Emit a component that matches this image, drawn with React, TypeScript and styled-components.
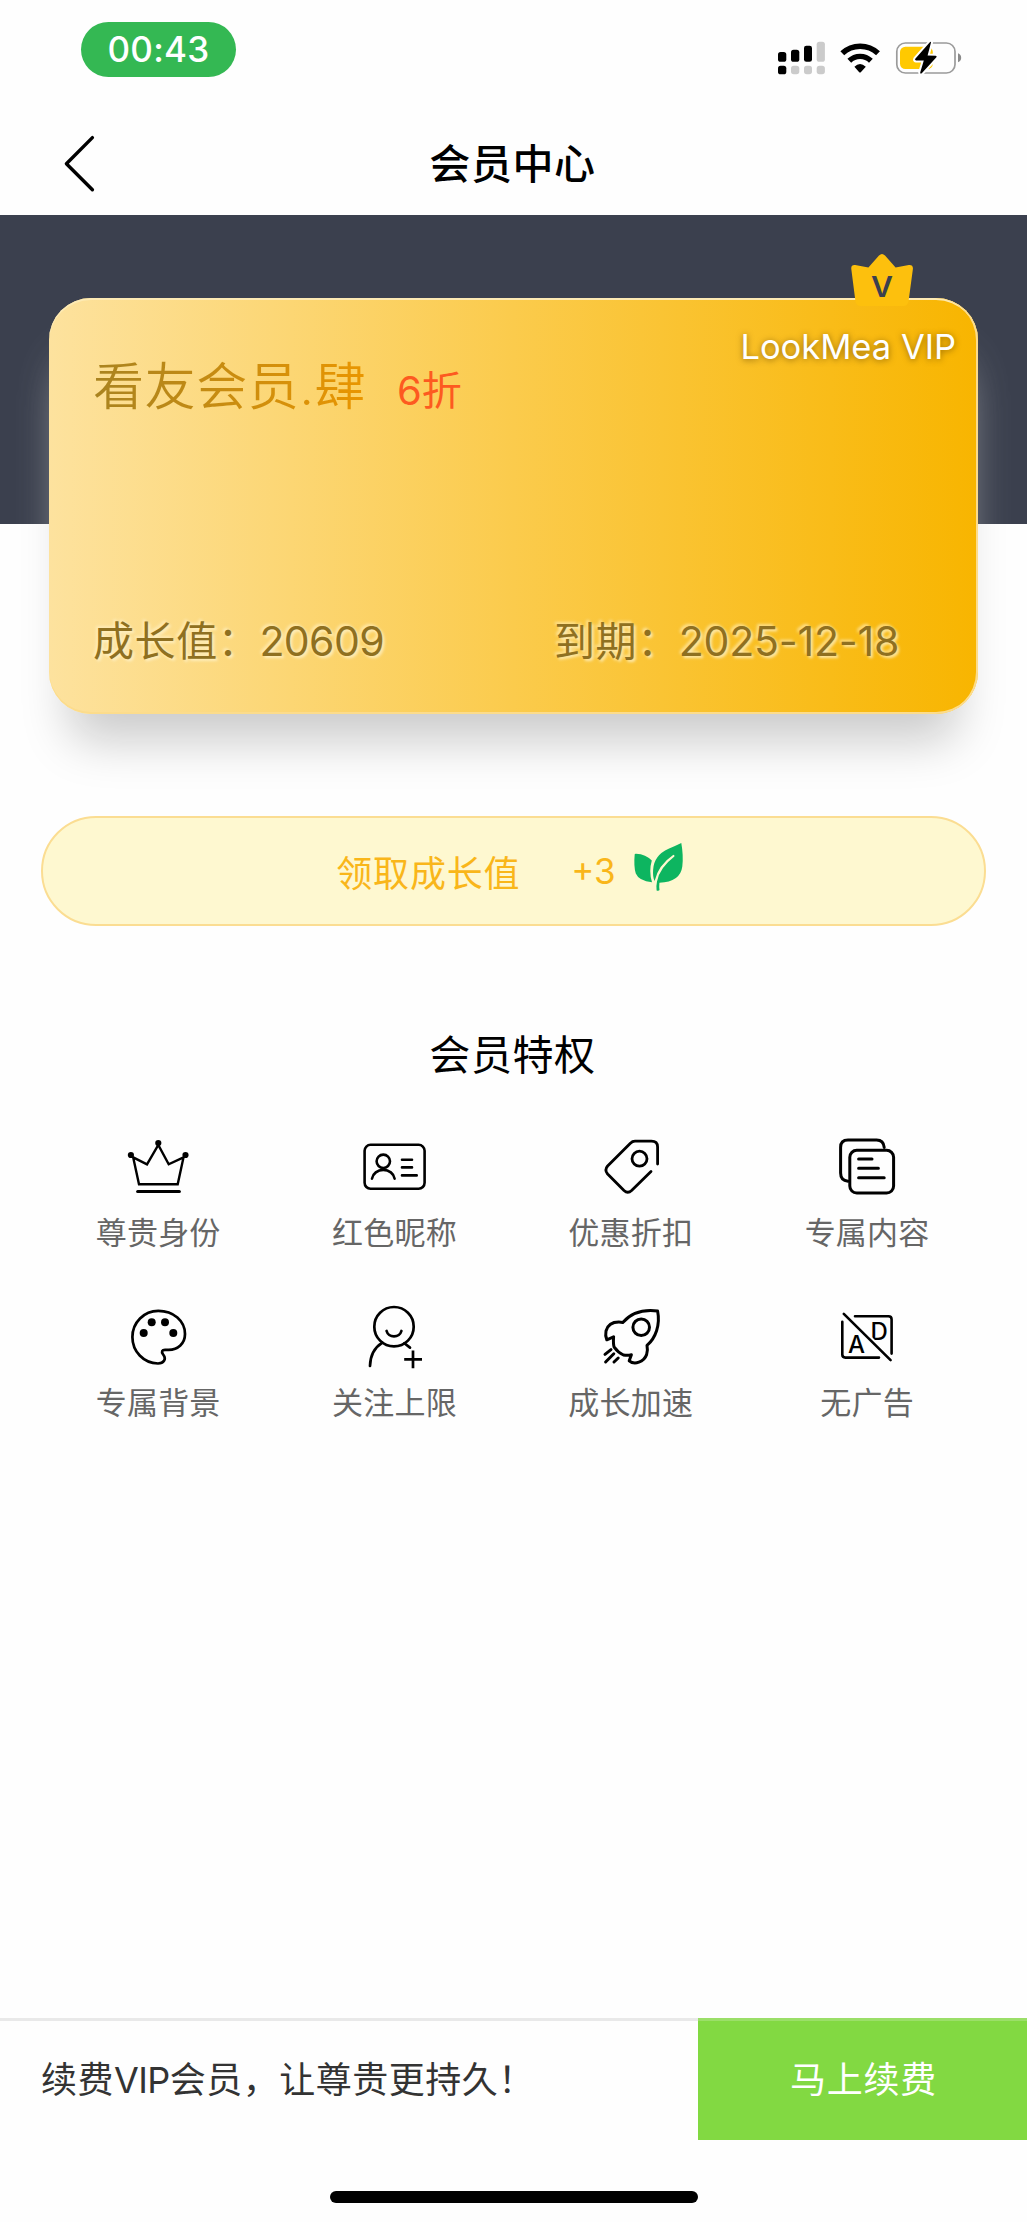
import React from 'react';
import styled, { createGlobalStyle } from 'styled-components';

const Global = createGlobalStyle`
  * { box-sizing: border-box; }
  body {
    margin: 0;
    background: #fefefe;
    font-family: Inter, 'Noto Sans CJK SC', sans-serif;
    font-weight: 400;
    color: #000;
  }
  svg { display: block; flex: none; }
`;

const Page = styled.div`
  width: 1027px;
  height: 2222px;
  display: flex;
  flex-direction: column;
  background: #fefefe;
  overflow: hidden;
`;

const StatusBar = styled.header`
  height: 112px;
  padding: 22px 0 0 81px;
  display: flex;
  align-items: flex-start;
`;

const Clock = styled.div`
  width: 155px;
  height: 55px;
  border-radius: 27.5px;
  background: #34b853;
  color: #fff;
  font-size: 35px;
  font-weight: 500;
  line-height: 55px;
  text-align: center;
  letter-spacing: 0.3px;
`;

const StatusIcons = styled.div`
  margin: 13px 0 0 534px;
`;

const NavBar = styled.nav`
  height: 103px;
  flex: none;
  display: grid;
  grid-template-columns: 159px 1fr 161px;
  align-items: center;
`;

const BackButton = styled.button`
  border: 0;
  padding: 0 0 0 60px;
  background: none;
  height: 103px;
`;

const NavTitle = styled.h1`
  margin: 0;
  font-size: 41px;
  line-height: 60px;
  font-weight: 500;
  letter-spacing: 0.6px;
  text-align: center;
`;

const Hero = styled.section`
  height: 309px;
  flex: none;
  padding: 83px 49px 0;
  background: #3b404e;
`;

const Card = styled.article`
  position: relative;
  height: 416px;
  padding: 52px 44px 43px;
  border-radius: 42px;
  display: flex;
  flex-direction: column;
  justify-content: space-between;
  background: linear-gradient(90deg, #fde29e 0%, #fbcb4c 50%, #f8b500 100%);
  box-shadow: inset -2px 0 0 #fcdc8c, inset 0 2px 0 #fdeab4, inset 0 -2px 0 #fcdc8c,
    0 47px 48px -20px #cbcbcb;
`;

const CardBadge = styled.div`
  position: absolute;
  right: 22px;
  top: -48px;
  display: flex;
  flex-direction: column;
  align-items: flex-end;
`;

const BadgeCrown = styled.div`
  padding-right: 42px;
`;

const BadgeName = styled.div`
  margin-top: 17px;
  font-size: 34.5px;
  line-height: 44px;
  color: #fff;
  white-space: nowrap;
  text-shadow: 0 1px 6px rgba(90, 60, 0, 0.65);
`;

const CardHead = styled.div`
  display: flex;
  align-items: baseline;
  gap: 31px;
`;

const LevelName = styled.span`
  font-size: 51px;
  line-height: 74px;
  font-weight: 350;
  letter-spacing: 0.6px;
  color: transparent;
  background: linear-gradient(90deg, #a98320, #ea9600);
  background-clip: text;
  -webkit-background-clip: text;
`;

const Discount = styled.span`
  font-size: 40px;
  color: #fd5a20;
`;

const CardStats = styled.div`
  display: grid;
  grid-template-columns: 461px 1fr;
`;

const Stat = styled.span`
  font-size: 41px;
  line-height: 60px;
  letter-spacing: 0.6px;
  color: #8f7020;
  white-space: nowrap;
  text-shadow: 2px 2px 3px rgba(255, 245, 210, 0.8), -2px -2px 3px rgba(255, 245, 210, 0.6);
`;

const Latin = styled.span<{ $track: number }>`
  letter-spacing: ${(p) => p.$track}px;
`;

const ClaimButton = styled.button`
  height: 110px;
  flex: none;
  margin: 292px 41px 0;
  padding: 0 6px 0 0;
  border: 2px solid #fbdd92;
  border-radius: 55px;
  background: #fef8d0;
  color: #f9b61a;
  font: inherit;
  font-size: 36px;
  display: flex;
  align-items: center;
  justify-content: center;
`;

const ClaimLabel = styled.span`
  letter-spacing: 0.8px;
`;

const ClaimAmount = styled.span`
  margin: 0 15px 0 51px;
  font-size: 35px;
`;

const LeafBox = styled.span`
  padding-bottom: 9px;
`;

const SectionTitle = styled.h2`
  margin: 99px 2px 0 0;
  font-size: 41px;
  line-height: 60px;
  font-weight: 400;
  letter-spacing: 0.6px;
  text-align: center;
`;

const Benefits = styled.ul`
  list-style: none;
  margin: 50px 40px 0;
  padding: 0;
  display: grid;
  grid-template-columns: repeat(4, 236.3px);
  grid-auto-rows: 170px;
`;

const Benefit = styled.li`
  display: flex;
  flex-direction: column;
  align-items: center;
`;

const BenefitLabel = styled.span`
  margin-top: 11px;
  font-size: 31px;
  line-height: 46px;
  letter-spacing: 0.2px;
  color: #666;
`;

const Footer = styled.footer`
  margin-top: auto;
  height: 204px;
  flex: none;
  display: flex;
  flex-direction: column;
  align-items: center;
`;

const RenewBar = styled.div`
  width: 100%;
  height: 122px;
  display: flex;
`;

const RenewText = styled.p`
  margin: 0;
  flex: 1;
  padding-left: 41px;
  border-top: 3px solid #e9e9e9;
  font-size: 36px;
  line-height: 119px;
  letter-spacing: 0.5px;
  color: #333;
  white-space: nowrap;
`;

const RenewButton = styled.button`
  width: 329px;
  border: 0;
  border-top: 3px solid #9bdf68;
  background: #82d942;
  color: #fff;
  font: inherit;
  font-size: 36px;
  line-height: 119px;
  letter-spacing: 0.8px;
  padding: 0 0 0 2px;
`;

const HomeIndicator = styled.div`
  margin-top: 51px;
  width: 368px;
  height: 12px;
  border-radius: 6px;
  background: #000;
`;

const StatusGlyphs = () => (
  <svg width="196" height="46" viewBox="0 0 196 46">
    <rect x="8" y="17" width="8.3" height="9.8" rx="2.6" />
    <rect x="21" y="14.7" width="8.3" height="12.1" rx="2.6" />
    <rect x="34" y="10.7" width="8" height="16.1" rx="2.4" />
    <g fill="#cbcbcb">
      <rect x="46.7" y="6.7" width="8.2" height="20.1" rx="2.6" />
      <rect x="21" y="30.7" width="8.3" height="8.6" rx="2.8" />
      <rect x="34" y="30.7" width="8" height="8.6" rx="2.8" />
      <rect x="46.7" y="30.7" width="8.2" height="8.6" rx="2.8" />
    </g>
    <rect x="8" y="30.7" width="8.3" height="8.6" rx="2.6" />
    <path d="M72.3 18.3 A26 26 0 0 1 108 18.3" fill="none" stroke="#000" strokeWidth="5.6" />
    <path d="M79.3 25.8 A15.5 15.5 0 0 1 100.9 25.8" fill="none" stroke="#000" strokeWidth="5.4" />
    <path d="M84.4 31.7 Q90 26.2 95.8 31.7 L91 37 Q90 38.2 89 37Z" />
    <rect x="126.8" y="8" width="58.2" height="30" rx="8.6" fill="none" stroke="#9b9b9b" strokeWidth="1.7" />
    <path d="M188 18.3 Q191.2 19.6 191.2 22.8 Q191.2 26 188 27.2Z" fill="#8a8a8a" />
    <rect x="130" y="11.7" width="32.8" height="22.4" rx="5.4" fill="#ffc900" />
    <path
      d="M161 7.6 Q161.3 6 159.6 7.6 L145.3 23.8 Q144.4 25.2 146 25.4 L153.8 25.5 L150.2 37.6 Q150.3 39.5 152 38 L166.4 22.3 Q167.3 20.8 165.6 20.7 L157.6 20.5Z"
      stroke="#fff" strokeWidth="4" paintOrder="stroke"
    />
  </svg>
);

const VipCrown = () => (
  <svg width="64" height="58" viewBox="0 0 64 58">
    <path
      d="M29 5.6 Q32 2.6 35 5.6 L45.6 17.6 L58.8 15 Q63.3 14.6 62.9 19 L58.6 51 Q58 56 53 56 H11 Q6 56 5.4 51 L1.3 19 Q0.8 14.6 5.2 15 L18.4 17.6Z"
      fill="#fdc00d"
    />
    <text x="32" y="47" textAnchor="middle" fontFamily="Inter, sans-serif" fontSize="28" fontWeight="600" fill="#3b404e" transform="translate(32 0) scale(1.08 1) translate(-32 0)">V</text>
  </svg>
);

const Leaf = () => (
  <svg width="54" height="54" viewBox="0 0 54 54">
    <path d="M3.7 14.3 Q3.8 13.6 5 13.7 Q15 14.2 20.8 20.6 Q17.6 31.5 21 42.2 Q8 41.2 4.8 33.6 Q2.6 26.8 3.7 14.3Z" fill="#0db560" />
    <path d="M50.3 3 Q52.6 16 51.3 26.6 Q49.4 42 28.4 42.8 Q28 47 28.5 50 Q28 51.2 25.6 50.6 Q25 46 26 41.4 Q28.6 28 43.4 16.6 Q44 15.4 42.4 14.8 Q27.2 25.2 23.6 41 Q21.6 37 22.1 30 Q22.8 15.4 37.6 8.8 Q45 5.6 50.3 3Z" fill="#0db560" />
  </svg>
);

const Glyph = ({ w = 2.5, children }: { w?: number; children: React.ReactNode }) => (
  <svg width="64" height="64" viewBox="0 0 64 64" fill="none" stroke="#000" strokeWidth={w} strokeLinecap="round" strokeLinejoin="round">
    {children}
  </svg>
);

const CrownGlyph = () => (
  <Glyph w={2.4}>
    <path d="M7.2 22.4 L21 29.3 L32.3 10 L42.7 29.3 L57.5 22.4 L51.7 49.3 H13Z" strokeLinejoin="miter" />
    <path d="M11.6 56.4 H53.4" strokeWidth="3" />
    <g fill="#000" stroke="none">
      <circle cx="4.9" cy="20" r="3.1" />
      <circle cx="32.3" cy="8" r="3.1" />
      <circle cx="59.5" cy="20" r="3.1" />
    </g>
  </Glyph>
);

const IdGlyph = () => (
  <Glyph w={2.6}>
    <rect x="2.6" y="9.8" width="60" height="44" rx="6" />
    <circle cx="21.3" cy="26.3" r="6.7" />
    <path d="M10 43.6 A11.4 10 0 0 1 32.6 43.6" />
    <path d="M40 24.7 H50 M40 32.4 H50 M40 40.4 H54.7" />
  </Glyph>
);

const TagGlyph = () => (
  <Glyph w={2.8}>
    <path d="M58.6 29 V12 Q58.6 6.2 52.4 6.2 H36 Q33.4 6.2 31.4 8.2 L8.6 31 Q5.2 35 8.6 39 L25 55.5 Q28.8 59 32.6 55.5 L52 36.6" />
    <circle cx="40.5" cy="23.7" r="7.5" />
  </Glyph>
);

const DocsGlyph = () => (
  <Glyph w={3}>
    <path d="M49.2 12.4 Q48.6 5 41.6 5 H13 Q5.6 5 5.6 12.4 V38 Q5.6 45.6 13 46.2" />
    <rect x="14.8" y="15.3" width="43.8" height="42.8" rx="7" />
    <path d="M23.6 24 H37 M23.6 33.3 H43.4 M23.6 42.7 H49.2" />
  </Glyph>
);

const PaletteGlyph = () => (
  <Glyph w={2.7}>
    <path d="M32.3 5.8 C47.5 5.8 59 16 59 29 C59 38.5 52 44.8 42.6 44.8 H39 C36 44.8 35.2 46.6 37 49.2 C41 54.4 37.4 58.5 32 58.5 C17.4 58.2 6.4 46.4 6.4 32 C6.4 17.4 18 5.8 32.3 5.8Z" />
    <g fill="#000" stroke="none">
      <circle cx="25.7" cy="17.3" r="4" />
      <circle cx="39" cy="17.3" r="4" />
      <circle cx="17.7" cy="28" r="4" />
      <circle cx="47.3" cy="28" r="4" />
    </g>
  </Glyph>
);

const FollowGlyph = () => (
  <Glyph w={2.7}>
    <circle cx="32" cy="21.7" r="19.7" />
    <path d="M24.6 26 A7.6 7 0 0 0 39.4 26" />
    <path d="M20.4 37.6 Q8.4 45 8 61" />
    <path d="M42.4 38.2 L48 42.6" />
    <path d="M51 45.6 V63.2 M42.2 54.3 H60" strokeLinecap="butt" />
  </Glyph>
);

const RocketGlyph = () => (
  <Glyph w={3}>
    <path d="M58.6 6 C43 4 31.6 8.6 23.8 17.4 C15 16.2 9 19 7 26 Q6 31 7.8 34.8 L14.6 31.8 C14.4 36 14 39 15.2 42.2 Q19 47.6 24.4 50 Q28.6 50.8 32.4 49.8 L30.2 55.8 C35.6 60.4 44.8 57 47.6 49.6 Q49 45 48 40.4 C56.6 33 61.4 20 58.6 6Z" />
    <circle cx="42.2" cy="22.3" r="8.3" />
    <path d="M12 44.6 L6 49.4 M14.8 48.8 L6.6 57 M19.2 53 L15 57" />
  </Glyph>
);

const NoAdGlyph = () => (
  <Glyph w={2.6}>
    <path d="M20 11.3 H53.4 Q56.6 11.3 56.6 14.4 V48.6 M7.3 16.8 V49.6 Q7.3 52.6 10.4 52.6 H44" />
    <g fill="#000" stroke="none" fontFamily="Inter, sans-serif" fontSize="24">
      <text x="13" y="47.6" fontWeight="500">A</text>
      <text x="35.6" y="34.6" fontWeight="500">D</text>
    </g>
    <path d="M8.8 8.8 L55.6 55.2" stroke="#fefefe" strokeWidth="6.6" />
    <path d="M8.8 8.8 L55.6 55.2" />
  </Glyph>
);

const BENEFITS: { label: string; Icon: () => React.ReactElement }[] = [
  { label: '尊贵身份', Icon: CrownGlyph },
  { label: '红色昵称', Icon: IdGlyph },
  { label: '优惠折扣', Icon: TagGlyph },
  { label: '专属内容', Icon: DocsGlyph },
  { label: '专属背景', Icon: PaletteGlyph },
  { label: '关注上限', Icon: FollowGlyph },
  { label: '成长加速', Icon: RocketGlyph },
  { label: '无广告', Icon: NoAdGlyph },
];

export default function App() {
  return (
    <Page lang="zh-CN">
      <Global />
      <StatusBar>
        <Clock>00:43</Clock>
        <StatusIcons>
          <StatusGlyphs />
        </StatusIcons>
      </StatusBar>
      <NavBar>
        <BackButton aria-label="返回">
          <svg width="38" height="62" viewBox="0 0 38 62" fill="none" stroke="#000" strokeWidth="3.4" strokeLinecap="round" strokeLinejoin="round">
            <path d="M32.4 4.6 L6.4 30.8 L32.4 56.8" />
          </svg>
        </BackButton>
        <NavTitle>会员中心</NavTitle>
      </NavBar>
      <Hero>
        <Card>
          <CardBadge>
            <BadgeCrown>
              <VipCrown />
            </BadgeCrown>
            <BadgeName>LookMea VIP</BadgeName>
          </CardBadge>
          <CardHead>
            <LevelName>看友会员.肆</LevelName>
            <Discount>6折</Discount>
          </CardHead>
          <CardStats>
            <Stat>
              成长值：<Latin $track={-0.6}>20609</Latin>
            </Stat>
            <Stat>
              到期：<Latin $track={-0.2}>2025-12-18</Latin>
            </Stat>
          </CardStats>
        </Card>
      </Hero>
      <ClaimButton>
        <ClaimLabel>领取成长值</ClaimLabel>
        <ClaimAmount>+3</ClaimAmount>
        <LeafBox>
          <Leaf />
        </LeafBox>
      </ClaimButton>
      <SectionTitle>会员特权</SectionTitle>
      <Benefits>
        {BENEFITS.map(({ label, Icon }) => (
          <Benefit key={label}>
            <Icon />
            <BenefitLabel>{label}</BenefitLabel>
          </Benefit>
        ))}
      </Benefits>
      <Footer>
        <RenewBar>
          <RenewText>
            续费<Latin $track={-0.6}>VIP</Latin>会员，让尊贵更持久！
          </RenewText>
          <RenewButton>马上续费</RenewButton>
        </RenewBar>
        <HomeIndicator />
      </Footer>
    </Page>
  );
}
